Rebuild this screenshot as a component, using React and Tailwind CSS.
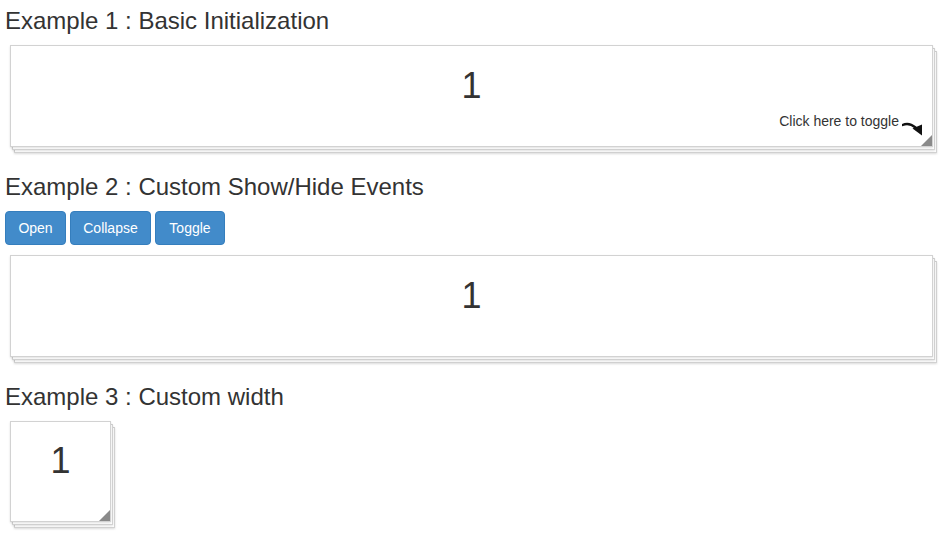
import React from "react";

function Stack({ className, children }) {
  return (
    <div className={"relative " + className}>
      <div className="absolute left-[4px] top-[6px] right-[-4px] bottom-[-6px] bg-white border border-[#d2d2d2] shadow-[0_1px_2px_rgba(0,0,0,0.15)]" />
      <div className="absolute left-[2px] top-[3px] right-[-2px] bottom-[-3px] bg-white border border-[#d2d2d2] shadow-[0_1px_2px_rgba(0,0,0,0.12)]" />
      <div className="relative h-full bg-white border border-[#d2d2d2] shadow-[0_1px_2px_rgba(0,0,0,0.12)]">
        {children}
      </div>
    </div>
  );
}

function Corner() {
  return (
    <svg className="absolute right-0 bottom-0" width="11" height="11" viewBox="0 0 11 11">
      <polygon points="11,0 11,11 0,11" fill="#8a8a8a" />
    </svg>
  );
}

function Arrow() {
  return (
    <svg width="21" height="15" viewBox="0 0 21 15" className="ml-[3px]">
      <path d="M0.5 4 Q 7 1 13.5 6.5" fill="none" stroke="#111" strokeWidth="2.4" strokeLinecap="round" />
      <polygon points="10.5,7.5 20,3.5 20,14.5" fill="#111" />
    </svg>
  );
}

function Btn({ w, children }) {
  return (
    <button className={"h-[34px] bg-[#428bca] border border-[#357ebd] rounded-[4px] text-white text-[14px] leading-[20px] text-center " + w}>
      {children}
    </button>
  );
}

export default function App() {
  return (
    <div className="bg-white min-h-[543px] pl-[5px] pt-[8px] text-[#333]" style={{ fontFamily: '"Liberation Sans", Arial, sans-serif' }}>
      <h3 className="text-[24px] leading-[26px] font-normal">Example 1 : Basic Initialization</h3>
      <Stack className="mt-[11px] ml-[5px] w-[923px] h-[102px]">
        <div className="pt-[20px] text-center text-[36px] leading-[40px]">1</div>
        <div className="absolute right-[9px] bottom-[10px] flex items-end text-[14px] leading-[16px]">
          <span className="mb-[7px]">Click here to toggle</span>
          <Arrow />
        </div>
        <Corner />
      </Stack>

      <h3 className="mt-[27px] text-[24px] leading-[26px] font-normal">Example 2 : Custom Show/Hide Events</h3>
      <div className="mt-[11px] flex gap-[4px]">
        <Btn w="w-[61px]">Open</Btn>
        <Btn w="w-[81px]">Collapse</Btn>
        <Btn w="w-[70px]">Toggle</Btn>
      </div>
      <Stack className="mt-[10px] ml-[5px] w-[923px] h-[102px]">
        <div className="pt-[20px] text-center text-[36px] leading-[40px]">1</div>
      </Stack>

      <h3 className="mt-[27px] text-[24px] leading-[26px] font-normal">Example 3 : Custom width</h3>
      <Stack className="mt-[11px] ml-[5px] w-[101px] h-[101px]">
        <div className="pt-[19px] text-center text-[36px] leading-[40px]">1</div>
        <Corner />
      </Stack>
    </div>
  );
}
